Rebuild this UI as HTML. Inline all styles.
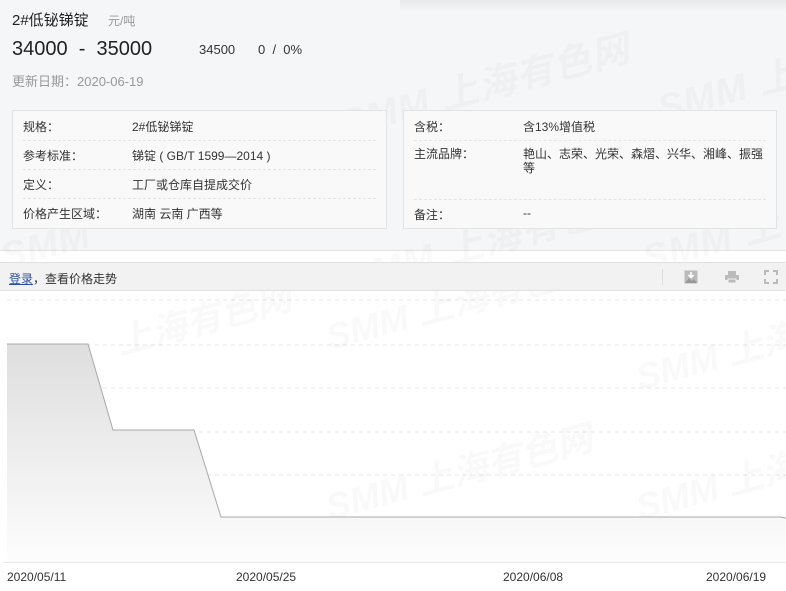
<!DOCTYPE html>
<html><head><meta charset="utf-8"><style>
*{margin:0;padding:0;box-sizing:border-box}
body{width:786px;height:591px;overflow:hidden;background:#fff;font-family:"Liberation Sans","Noto Sans CJK SC",sans-serif;color:#333;position:relative}
.top{position:absolute;left:0;top:0;width:786px;height:251px;background:#f5f6f8;border-bottom:1px solid #e3e3e3}
.shadow{position:absolute;left:400px;top:0;width:386px;height:12px;background:linear-gradient(#e8e9eb,#f5f6f8)}
.abs{position:absolute;white-space:nowrap}
.box{position:absolute;top:110px;height:119px;background:#f9f9fa;border:1px solid #e2e3e5}
.row{position:absolute;left:10px;right:10px;font-size:12px;color:#333}
.sep{position:absolute;left:10px;right:10px;border-top:1px dashed #e4e4e4}
.wm{position:absolute;font:italic bold 38px "Liberation Sans","Noto Sans CJK SC",sans-serif;color:rgba(0,0,0,0.025);transform:rotate(-15deg);white-space:nowrap;letter-spacing:1px}
.tb{position:absolute;left:0;top:262px;width:786px;height:29px;background:#f2f2f2;border-top:1px solid #e0e0e0;border-bottom:1px solid #e0e0e0}
</style></head><body>
<div class="top"></div>
<div class="shadow"></div>
<div class="wm" style="left:335px;top:55px">SMM 上海有色网</div>
<div class="wm" style="left:655px;top:60px">SMM 上</div>
<div class="wm" style="left:0;top:225px">SMM</div>
<div class="wm" style="left:340px;top:210px">SMM 上海有色网</div>
<div class="wm" style="left:640px;top:210px">SMM 上</div>

<div class="abs" style="left:12px;top:9px;font-size:15px;color:#222">2#低铋锑锭</div>
<div class="abs" style="left:108px;top:12px;font-size:12px;color:#999">元/吨</div>
<div class="abs" style="left:12px;top:38px;font-size:20px;color:#222">34000&nbsp; - &nbsp;35000</div>
<div class="abs" style="left:199px;top:42px;font-size:13px;color:#333">34500</div>
<div class="abs" style="left:258px;top:42px;font-size:13px;color:#333">0 &nbsp;/&nbsp; 0%</div>
<div class="abs" style="left:12px;top:71px;font-size:13px;color:#999">更新日期：2020-06-19</div>

<div class="box" style="left:12px;width:375px">
 <div class="row" style="top:7px"><span style="position:absolute;left:0">规格：</span><span style="position:absolute;left:109px">2#低铋锑锭</span></div>
 <div class="sep" style="top:29px"></div>
 <div class="row" style="top:36px"><span style="position:absolute;left:0">参考标准：</span><span style="position:absolute;left:109px">锑锭 ( GB/T 1599—2014 )</span></div>
 <div class="sep" style="top:58px"></div>
 <div class="row" style="top:65px"><span style="position:absolute;left:0">定义：</span><span style="position:absolute;left:109px">工厂或仓库自提成交价</span></div>
 <div class="sep" style="top:87px"></div>
 <div class="row" style="top:94px"><span style="position:absolute;left:0">价格产生区域：</span><span style="position:absolute;left:109px">湖南 云南 广西等</span></div>
</div>
<div class="box" style="left:403px;width:374px">
 <div class="row" style="top:7px"><span style="position:absolute;left:0">含税：</span><span style="position:absolute;left:109px">含13%增值税</span></div>
 <div class="sep" style="top:29px"></div>
 <div class="row" style="top:36px;line-height:14px"><span style="position:absolute;left:0">主流品牌：</span><span style="position:absolute;left:109px;white-space:normal;width:250px">艳山、志荣、光荣、森熠、兴华、湘峰、振强等</span></div>
 <div class="sep" style="top:88px"></div>
 <div class="row" style="top:95px"><span style="position:absolute;left:0">备注：</span><span style="position:absolute;left:109px">--</span></div>
</div>

<div class="tb">
 <div class="abs" style="left:9px;top:7px;font-size:12px;color:#333"><span style="color:#2a4fa8;text-decoration:underline">登录</span>，查看价格走势</div>
 <div class="abs" style="left:662px;top:6px;width:1px;height:16px;background:#ddd"></div>
 <svg class="abs" style="left:684px;top:7px" width="14" height="14" viewBox="0 0 14 14"><rect x="0.5" y="0.5" width="13" height="13" fill="#bbb"/><path d="M1 13 L5 8 L8 11 L10 9 L13 13Z" fill="#999"/><path d="M7 2 V7 M4.5 5 L7 7.5 L9.5 5" stroke="#fff" stroke-width="1.6" fill="none"/></svg>
 <svg class="abs" style="left:725px;top:7px" width="14" height="14" viewBox="0 0 14 14"><rect x="3" y="1" width="8" height="4" fill="#bbb"/><rect x="0" y="5" width="14" height="5" rx="1" fill="#bbb"/><rect x="3" y="9" width="8" height="4" fill="#bbb" stroke="#f2f2f2"/></svg>
 <svg class="abs" style="left:764px;top:7px" width="14" height="14" viewBox="0 0 14 14" fill="none" stroke="#bbb" stroke-width="2"><path d="M1 5V1H5M9 1H13V5M13 9V13H9M5 13H1V9"/></svg>
</div>

<svg class="abs" style="left:0;top:291px" width="786" height="300" viewBox="0 291 786 300">
 <defs><linearGradient id="g" x1="0" y1="0" x2="0" y2="1"><stop offset="0" stop-color="#dedede"/><stop offset="1" stop-color="#fdfdfd"/></linearGradient></defs>
 <g stroke="#e6e6e6" stroke-dasharray="4,4"><line x1="7" y1="300" x2="786" y2="300"/><line x1="7" y1="345" x2="786" y2="345"/><line x1="7" y1="388" x2="786" y2="388"/><line x1="7" y1="432" x2="786" y2="432"/><line x1="7" y1="475" x2="786" y2="475"/><line x1="7" y1="518" x2="786" y2="518"/></g>
 <g font-family="Liberation Sans,Noto Sans CJK SC,sans-serif" font-size="36" font-weight="bold" font-style="italic" fill="rgba(0,0,0,0.025)">
 <text x="330" y="350" transform="rotate(-15 330 350)">SMM 上海有色网</text>
 <text x="120" y="355" transform="rotate(-15 120 355)">上海有色网</text>
 <text x="640" y="390" transform="rotate(-15 640 390)">SMM 上海</text>
 <text x="330" y="520" transform="rotate(-15 330 520)">SMM 上海有色网</text>
 <text x="640" y="520" transform="rotate(-15 640 520)">SMM 上海</text>
 </g>
 <path d="M7 344 L88 344 L113 430 L194 430 L221 517 L780 517 L786 518 L786 562 L7 562Z" fill="url(#g)"/>
 <path d="M7 344 L88 344 L113 430 L194 430 L221 517 L780 517 L786 518" fill="none" stroke="#a8a8a8" stroke-width="1"/>
 <line x1="4" y1="562.5" x2="786" y2="562.5" stroke="#e6e6e6"/>
 <g font-family="Liberation Sans,sans-serif" font-size="12" fill="#333"><text x="7" y="581">2020/05/11</text><text x="236" y="581">2020/05/25</text><text x="503" y="581">2020/06/08</text><text x="706" y="581">2020/06/19</text></g>
</svg>
</body></html>
